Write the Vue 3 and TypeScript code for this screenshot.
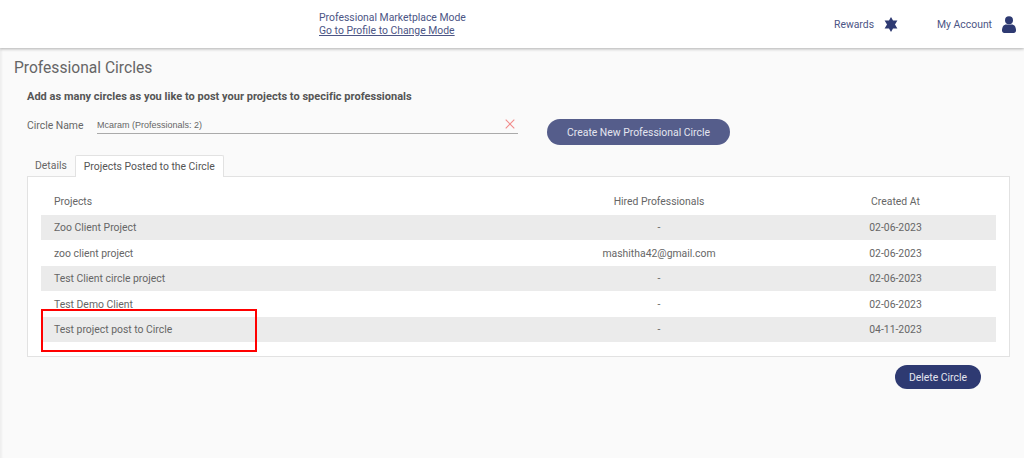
<template>
  <div class="page">
    <header class="topbar">
      <div class="mode">
        <span>Professional Marketplace Mode</span>
        <a class="mode-link">Go to Profile to Change Mode</a>
      </div>
      <div class="top-item rewards">
        <span>Rewards</span>
        <svg width="14" height="15" viewBox="0 0 14 15"><path d="M7 0l2 3.5h4.4L11 7.5l2.4 4H9L7 15l-2-3.5H.6L3 7.5l-2.4-4H5z" fill="#2e3a72" /></svg>
      </div>
      <div class="top-item account">
        <span>My Account</span>
        <svg width="14" height="17" viewBox="0 0 14 17"><circle cx="7" cy="4.2" r="4" fill="#2e3a72" /><path d="M0 14.5c0-4 2-6 4.2-6h5.6c2.2 0 4.2 2 4.2 6 0 1.6-1 2.5-2.2 2.5H2.2C1 17 0 16.1 0 14.5z" fill="#2e3a72" /></svg>
      </div>
    </header>

    <main class="content">
      <h1 class="title">Professional Circles</h1>
      <div class="body">
        <p class="intro">Add as many circles as you like to post your projects to specific professionals</p>
        <div class="name-row">
          <label class="name-label">Circle Name</label>
          <div class="name-input">
            <span>Mcaram (Professionals: 2)</span>
            <svg class="clear" width="10" height="10" viewBox="0 0 10 10"><path d="M.7.7l8.6 8.6M9.3.7L.7 9.3" stroke="#f28b8b" stroke-width="1.1" fill="none" /></svg>
          </div>
          <button class="btn btn-create">Create New Professional Circle</button>
        </div>

        <div class="tabs">
          <span class="tab">Details</span>
          <span class="tab active">Projects Posted to the Circle</span>
        </div>
        <div class="panel">
          <div class="row head">
            <span>Projects</span>
            <span class="mid">Hired Professionals</span>
            <span class="mid">Created At</span>
          </div>
          <div v-for="(p, i) in projects" :key="i" class="row" :class="{ shaded: i % 2 === 0 }">
            <span>{{ p.name }}</span>
            <span class="mid">{{ p.hired }}</span>
            <span class="mid">{{ p.date }}</span>
          </div>
          <div class="mark"></div>
        </div>
        <div class="actions">
          <button class="btn btn-delete">Delete Circle</button>
        </div>
      </div>
    </main>
  </div>
</template>

<script setup lang="ts">
const projects = [
  { name: 'Zoo Client Project', hired: '-', date: '02-06-2023' },
  { name: 'zoo client project', hired: 'mashitha42@gmail.com', date: '02-06-2023' },
  { name: 'Test Client circle project', hired: '-', date: '02-06-2023' },
  { name: 'Test Demo Client', hired: '-', date: '02-06-2023' },
  { name: 'Test project post to Circle', hired: '-', date: '04-11-2023' },
]
</script>

<style>
html, body { margin: 0; background: #fafafa; }
</style>

<style scoped>
.page {
  height: 458px;
  overflow: hidden;
  background: #fafafa;
  font-family: Roboto, "Liberation Sans", sans-serif;
  color: #666;
}
.topbar {
  height: 48px;
  display: flex;
  align-items: center;
  background: #fff;
  box-shadow: 0 1px 3px rgba(0, 0, 0, 0.3);
  padding-left: 319px;
  color: #4c5585;
  font-size: 10.4px;
  position: relative;
  z-index: 1;
}
.mode { display: flex; flex-direction: column; line-height: 13px; width: 515px; margin-top: -1px; }
.mode-link { text-decoration: underline; }
.top-item { display: flex; align-items: center; }
.rewards { gap: 10px; width: 103px; }
.account { gap: 10px; }
.content { padding: 11px 0 0 14px; height: 399px; box-shadow: inset 3px 0 2px -1px #efefef; }
.title { margin: 0; font-size: 15.6px; font-weight: 400; line-height: 19px; color: #666; }
.body { padding: 0 14px 0 13px; }
.intro { margin: 12px 0 0; font-size: 11px; line-height: 14px; font-weight: 700; color: #555; letter-spacing: 0.02px; }
.name-row { display: flex; align-items: flex-start; margin-top: 11px; height: 35px; }
.name-label { width: 70px; font-size: 10.4px; line-height: 18px; padding-top: 2px; }
.name-input {
  width: 421px;
  height: 19px;
  box-sizing: border-box;
  display: flex;
  align-items: center;
  justify-content: space-between;
  border-bottom: 1px solid #aaa;
  font-family: "Liberation Sans", Arial, sans-serif;
  font-size: 9px;
  padding: 2px 3px 0 0;
}
.clear { margin-top: -2px; }
.btn {
  border: 0;
  border-radius: 13px;
  height: 26px;
  padding: 0;
  font-family: inherit;
  font-size: 10.4px;
  color: #e4e6f0;
}
.btn-create { width: 183px; margin: 4px 0 0 29px; background: #555d8b; }
.tabs { display: flex; height: 21px; margin-top: 5px; align-items: flex-end; font-size: 10.4px; }
.tab { padding: 0 8px; line-height: 21px; }
.tab.active {
  background: #fff;
  border: 1px solid #e2e2e2;
  border-bottom: 0;
  border-radius: 2px 2px 0 0;
  color: #555;
  margin-bottom: -1px;
  position: relative;
  z-index: 1;
}
.panel {
  position: relative;
  background: #fff;
  border: 1px solid #e2e2e2;
  padding: 12px 13px 14px;
  font-size: 10.4px;
}
.row {
  display: grid;
  grid-template-columns: 482px 272px 201px;
  height: 25.5px;
  align-items: center;
}
.row > span { padding-top: 0.8px; }
.row > span:first-child { padding-left: 13px; }
.head > span { padding-top: 0; }
.shaded { background: #ebebeb; }
.mid { text-align: center; }
.mark {
  position: absolute;
  left: 13px;
  top: 132px;
  width: 212px;
  height: 39px;
  border: 2px solid #f00;
}
.actions { display: flex; justify-content: flex-end; margin-top: 8px; padding-right: 29px; }
.btn-delete { width: 86px; height: 24px; background: #2e3a72; }
</style>
